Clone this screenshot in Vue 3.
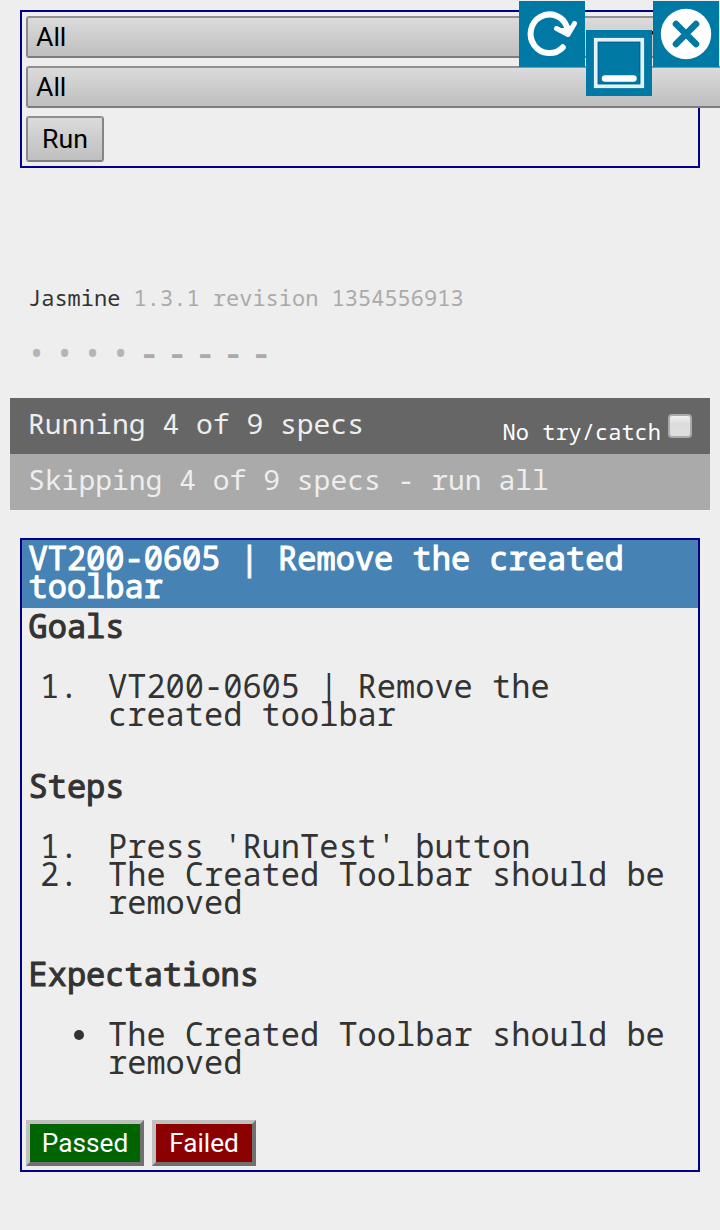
<script setup>
import { ref } from 'vue'

const filters = ['All', 'All']
const results = ['•', '•', '•', '•', '-', '-', '-', '-', '-']
const noTryCatch = ref(false)
const sections = [
  { title: 'Goals', ordered: true, items: ['VT200-0605 | Remove the created toolbar'] },
  { title: 'Steps', ordered: true, items: ["Press 'RunTest' button", 'The Created Toolbar should be removed'] },
  { title: 'Expectations', ordered: false, items: ['The Created Toolbar should be removed'] },
]
</script>

<template>
  <main class="page">
    <section class="filters">
      <div v-for="(f, i) in filters" :key="i" class="select" :class="{ wide: i === 1 }">
        <span>{{ f }}</span><i v-if="i === 0" class="arrow"></i>
      </div>
      <button class="run">Run</button>
    </section>

    <nav class="controls">
      <svg class="ctl" viewBox="0 0 66 66">
        <rect width="66" height="66" fill="#0079a5" />
        <path d="M43.8 46.3A18.8 19.3 0 1 1 48 26" fill="none" stroke="#fff" stroke-width="6" stroke-linecap="round" />
        <path d="M37.5 27.5L49 33.5L55.5 22.5" fill="none" stroke="#fff" stroke-width="5" stroke-linecap="round" stroke-linejoin="round" />
        <path d="M38 27L49 34L54 24L47 27Z" fill="#fff" />
      </svg>
      <svg class="ctl low" viewBox="0 0 66 66">
        <rect width="66" height="66" fill="#0079a5" />
        <rect x="9.8" y="9.8" width="46.4" height="46.4" fill="none" stroke="#e4f2f7" stroke-width="3.8" />
        <rect x="12.3" y="12.3" width="41.4" height="41.4" fill="none" stroke="#006597" stroke-width="1" />
        <path d="M19 48.5H47.5" stroke="#fff" stroke-width="6.4" stroke-linecap="round" />
      </svg>
      <svg class="ctl" viewBox="0 0 66 66">
        <rect width="66" height="66" fill="#0079a5" />
        <circle cx="33" cy="33" r="25.2" fill="#fff" />
        <path d="M23 23L43 43M43 23L23 43" stroke="#0079a5" stroke-width="6.6" stroke-linecap="round" />
      </svg>
    </nav>

    <header class="banner">Jasmine <span>1.3.1 revision 1354556913</span></header>
    <ul class="symbols">
      <li v-for="(r, i) in results" :key="i" :class="{ skipped: r === '-' }">{{ r }}</li>
    </ul>

    <section class="bars">
      <div class="bar running">
        <span>Running 4 of 9 specs</span>
        <label class="trycatch">No try/catch<input v-model="noTryCatch" type="checkbox"></label>
      </div>
      <div class="bar skipping">Skipping 4 of 9 specs - run all</div>
    </section>

    <section class="spec">
      <h1>VT200-0605 | Remove the created toolbar</h1>
      <template v-for="s in sections" :key="s.title">
        <h2>{{ s.title }}</h2>
        <ul class="list">
          <li v-for="(item, i) in s.items" :key="i">
            <span v-if="s.ordered" class="num">{{ i + 1 }}.</span>
            <span v-else class="bullet"></span>
            <span class="text">{{ item }}</span>
          </li>
        </ul>
      </template>
      <div class="actions">
        <button class="verdict passed">Passed</button>
        <button class="verdict failed">Failed</button>
      </div>
    </section>
  </main>
</template>

<style>
body { background: #eee; }
</style>

<style scoped>
* { box-sizing: border-box; }
ul, h1, h2 { margin: 0; padding: 0; list-style: none; }
.page {
  position: relative;
  width: 720px;
  height: 1230px;
  padding: 10px;
  overflow: hidden;
  background: #eee;
  color: #333;
  font-family: "Droid Sans Mono", "Noto Sans Mono", "DejaVu Sans Mono", monospace;
}
.filters {
  display: flex;
  flex-direction: column;
  align-items: flex-start;
  gap: 8px;
  height: 158px;
  margin: 0 10px;
  padding: 4px;
  border: 2px solid #00008b;
}
.select, .run {
  flex: none;
  border: 2px solid;
  border-color: #909090 #858585 #7d7d7d #8a8a8a;
  border-radius: 3px;
  background: linear-gradient(#dbdbdb, #bfbfbf);
  color: #000;
  font: 26.67px/38px Roboto, sans-serif;
}
.select {
  display: flex;
  justify-content: space-between;
  align-items: center;
  width: 670px;
  height: 42px;
  padding: 0 34px 0 8px;
}
.select.wide { width: 720px; }
.arrow { border: 5px solid transparent; border-top: 7px solid #000; }
.run { width: 78px; height: 46px; padding: 0; line-height: 42px; }
.controls { position: absolute; top: 1px; left: 519px; display: flex; gap: 1px; }
.ctl { width: 66px; height: 66px; flex: none; }
.low { margin-top: 29px; }
.banner {
  margin: 115px 18px 0;
  height: 28px;
  font-size: 22px;
  line-height: 28px;
}
.banner span { color: #aaa; }
.symbols { display: flex; height: 28px; margin: 27px 0 0 18px; }
.symbols li {
  width: 28px;
  color: #b5b5b5;
  font-size: 32px;
  line-height: 30px;
  text-indent: -1px;
}
.symbols .skipped { color: #aaa; font-size: 34px; font-weight: 600; line-height: 28px; }
.bars { margin-top: 32px; font-size: 28px; color: #eee; }
.bar {
  display: flex;
  justify-content: space-between;
  height: 56px;
  padding: 0 18px;
  line-height: 50px;
}
.running { background: #666; }
.skipping { background: #aaa; }
.trycatch {
  display: flex;
  align-items: flex-start;
  gap: 7px;
  padding-top: 16px;
  color: #fff;
  font-size: 22px;
  line-height: 34px;
}
.trycatch input {
  appearance: none;
  width: 24px;
  height: 24px;
  margin: 0;
  border: 2px solid #aaa;
  border-radius: 4px;
  background: linear-gradient(#f0f0f0, #dcdcdc 40%, #dedede);
}
.spec {
  height: 634px;
  margin: 28px 10px 0;
  border: 2px solid #00008b;
  font-size: 32px;
  line-height: 28px;
}
h1, h2 {
  font-size: 32px;
  font-weight: normal;
  -webkit-text-stroke: 1.1px currentColor;
}
h1 { height: 68px; padding: 4px 6px 8px 6.5px; background: #4682b4; color: #fff; }
h2 { margin: 4px 6px 32px 6.5px; }
.list { margin: 0 6px 44px; }
.list + h2 { margin-top: 0; }
.list li { display: grid; grid-template-columns: 80px 1fr; }
.num { padding-left: 12px; }
.bullet { width: 10px; height: 10px; margin: 10px 0 0 46px; border-radius: 50%; background: #333; }
.actions { display: flex; gap: 8px; margin-left: 4px; }
.verdict {
  height: 46px;
  padding: 0;
  border: 4px solid;
  border-color: #c0c0c0 #707070 #707070 #c0c0c0;
  color: #fff;
  font: 26.2px/38px Roboto, sans-serif;
}
.passed { width: 118px; background: #006400; }
.failed { width: 104px; background: #8b0000; }
</style>
